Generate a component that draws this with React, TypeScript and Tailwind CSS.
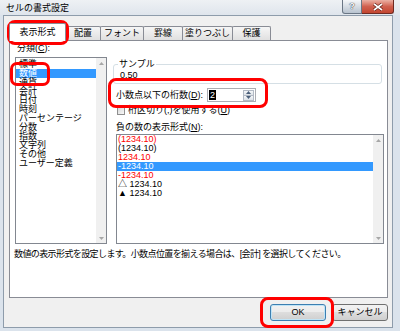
const FONT = "font-['Liberation_Sans','Noto_Sans_CJK_JP',sans-serif]";

const tabs = [
  { label: "表示形式", w: "w-[57px]", active: true },
  { label: "配置", w: "w-[36px]" },
  { label: "フォント", w: "w-[44px]" },
  { label: "罫線", w: "w-[40px]" },
  { label: "塗りつぶし", w: "w-[51px]" },
  { label: "保護", w: "w-[39px]" },
];

const categories = [
  "標準",
  "数値",
  "通貨",
  "会計",
  "日付",
  "時刻",
  "パーセンテージ",
  "分数",
  "指数",
  "文字列",
  "その他",
  "ユーザー定義",
];

const negatives = [
  { text: "(1234.10)", red: true },
  { text: "(1234.10)" },
  { text: "1234.10", red: true },
  { text: "-1234.10", selected: true },
  { text: "-1234.10", red: true },
  { text: "△ 1234.10" },
  { text: "▲ 1234.10" },
];

function Arrow({ down, color = "#a7a7a7" }: { down?: boolean; color?: string }) {
  return (
    <svg width="5" height="3" viewBox="0 0 5 3">
      <path d={down ? "M0 0H5L2.5 3Z" : "M0 3H5L2.5 0Z"} fill={color} />
    </svg>
  );
}

function ScrollBar() {
  return (
    <div className="flex w-[10px] flex-col justify-between bg-[#f0f0f0]">
      <div className="flex h-[10px] items-center justify-center">
        <Arrow />
      </div>
      <div className="flex h-[10px] items-center justify-center">
        <Arrow down />
      </div>
    </div>
  );
}

const btn =
  "flex h-[17px] w-[56px] items-center justify-center rounded-[3px] border bg-[linear-gradient(#f2f2f2,#ebebeb_50%,#dddddd_50%,#cfcfcf)]";

export default function App() {
  return (
    <div className={`relative h-[331px] w-[400px] overflow-hidden bg-[#dbe3ec] text-[9px] leading-[9px] text-black ${FONT}`}>
      {/* title bar */}
      <div className="flex h-[15px] items-start justify-between bg-linear-to-b from-[#eef1f4] to-[#dfe5ec]">
        <span className="pl-[6px] pt-[4px] text-[9px] leading-[9px]">セルの書式設定</span>
        <div className="mr-[6px] flex">
          <div className="flex h-[14px] w-[20px] items-center justify-center rounded-bl-[3px] border border-t-0 border-[#6a7684] bg-linear-to-b from-[#f5f7f9] to-[#b8c3cf] text-[9px] font-bold text-white [text-shadow:0_0_1px_#2a3440,0_0_1px_#2a3440]">
            ?
          </div>
          <div className="flex h-[14px] w-[32px] items-center justify-center rounded-br-[3px] border border-l-0 border-t-0 border-[#6e2a22] bg-linear-to-b from-[#eab0a4] via-[#d0604f] to-[#c3452f]">
            <svg width="10" height="8" viewBox="0 0 10 8">
              <path d="M1 1L9 7M9 1L1 7" stroke="#5a1a12" strokeWidth="3" />
              <path d="M1 1L9 7M9 1L1 7" stroke="#ffffff" strokeWidth="1.6" />
            </svg>
          </div>
        </div>
      </div>

      {/* client area */}
      <div className="ml-[3px] flex h-[313px] w-[390px] flex-col border border-[#8e9cab] bg-[#f0f0f0]">
        {/* tabs */}
        <div className="ml-[5px] mt-[7px] flex h-[17px] items-end">
          {tabs.map((t, i) =>
            t.active ? (
              <div
                key={t.label}
                className={`relative z-10 -mb-px flex h-[18px] ${t.w} items-center justify-center rounded-t-[2px] border border-b-0 border-[#898c95] bg-white`}
              >
                {t.label}
              </div>
            ) : (
              <div
                key={t.label}
                className={`${i > 0 ? "-ml-px" : ""} flex h-[14px] ${t.w} items-center justify-center rounded-t-[2px] border border-b-0 border-[#898c95] bg-linear-to-b from-[#f6f6f6] to-[#e0e0e0]`}
              >
                {t.label}
              </div>
            )
          )}
        </div>

        {/* panel */}
        <div className="ml-[5px] flex h-[258px] w-[379px] flex-col border border-[#898c95] bg-white">
          <div className="flex pt-[3px]">
            {/* categories */}
            <div className="ml-[5px] w-[92px]">
              <div className="pl-[2px]">
                分類(<span className="underline">C</span>):
              </div>
              <div className="mt-[4px] flex h-[187px] border border-[#828790] bg-white">
                <div className="flex-1 pt-[2px]">
                  {categories.map((c) => (
                    <div
                      key={c}
                      className={`h-[9px] pl-[3px] leading-[9px] ${c === "数値" ? "bg-[#3399ff] text-white" : ""}`}
                    >
                      {c}
                    </div>
                  ))}
                </div>
                <ScrollBar />
              </div>
            </div>

            {/* right side */}
            <div className="ml-[6px] w-[271px] pt-[16px]">
              <fieldset className="mr-[2px] rounded-[3px] border border-[#d5dfe5] px-[4px] pb-[3px]">
                <legend className="px-[1px] leading-[9px]">サンプル</legend>
                <div className="mt-[2px] pl-[2px] leading-[9px]">0.50</div>
              </fieldset>

              <div className="mt-[4px] flex h-[14px] items-center pl-[3px]">
                <div className="w-[91px]">
                  小数点以下の桁数(<span className="underline">D</span>):
                </div>
                <div className="flex h-[14px] w-[49px] items-center justify-between border border-[#abadb3] bg-white">
                  <span className="ml-[1px] h-[10px] bg-black px-px leading-[10px] text-white">2</span>
                  <div className="mr-px flex flex-col">
                    <div className="flex h-[6px] w-[11px] items-center justify-center border border-[#b3bac5] bg-linear-to-b from-[#f5f7f9] to-[#dde2e8]">
                      <Arrow color="#4b5f7a" />
                    </div>
                    <div className="-mt-px flex h-[6px] w-[11px] items-center justify-center border border-[#b3bac5] bg-linear-to-b from-[#f5f7f9] to-[#dde2e8]">
                      <Arrow down color="#4b5f7a" />
                    </div>
                  </div>
                </div>
              </div>

              <div className="mt-[3px] flex h-[11px] items-center pl-[4px]">
                <div className="h-[8px] w-[8px] border border-[#8f8f8f] bg-linear-to-br from-[#d8d8d8] to-[#f8f8f8]" />
                <span className="ml-[3px]">
                  桁区切り(,)を使用する(<span className="underline">U</span>)
                </span>
              </div>

              <div className="mt-[7px] pl-[3px]">
                負の数の表示形式(<span className="underline">N</span>):
              </div>
              <div className="ml-[3px] mt-[2px] flex h-[110px] border border-[#828790] bg-white">
                <div className="flex-1">
                  {negatives.map((n, i) => (
                    <div
                      key={i}
                      className={`h-[9px] pl-[1px] leading-[9px] ${
                        n.selected ? "bg-[#3399ff] text-white" : n.red ? "text-[#ff0000]" : ""
                      }`}
                    >
                      {n.text}
                    </div>
                  ))}
                </div>
                <ScrollBar />
              </div>
            </div>
          </div>

          <div className="ml-[4px] mt-[6px] tracking-[-0.6px]">
            数値の表示形式を設定します。小数点位置を揃える場合は、[会計] を選択してください。
          </div>
        </div>

        {/* buttons */}
        <div className="mr-[4px] mt-[6px] flex justify-end gap-[6px]">
          <div className={`${btn} border-[#3c7fb1] shadow-[inset_0_0_0_1px_#bfe4f7]`}>OK</div>
          <div className={`${btn} border-[#707070]`}>キャンセル</div>
        </div>
      </div>

      {/* red annotation rings */}
      <div className="pointer-events-none absolute left-[7px] top-[20px] h-[25px] w-[62px] rounded-[8px] border-[3px] border-[#ff0000]" />
      <div className="pointer-events-none absolute left-[10px] top-[62px] h-[24px] w-[40px] rounded-[7px] border-[3px] border-[#ff0000]" />
      <div className="pointer-events-none absolute left-[108px] top-[78px] h-[30px] w-[160px] rounded-[8px] border-[3px] border-[#ff0000]" />
      <div className="pointer-events-none absolute left-[260px] top-[297px] h-[31px] w-[74px] rounded-[8px] border-[3px] border-[#ff0000]" />
    </div>
  );
}
